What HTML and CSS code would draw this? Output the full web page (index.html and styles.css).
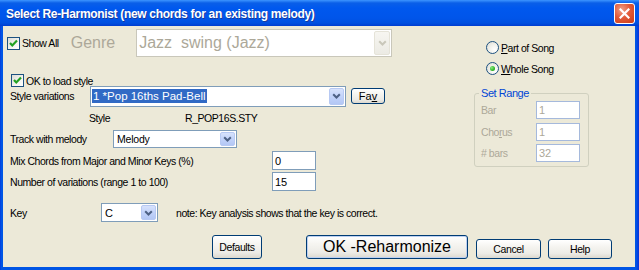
FILE: index.html
```html
<!DOCTYPE html>
<html>
<head>
<meta charset="utf-8">
<title>Select Re-Harmonist</title>
<link rel="stylesheet" href="styles.css">
</head>
<body>
<div class="window">
  <div class="titlebar">
    <span class="title">Select Re-Harmonist (new chords for an existing melody)</span>
    <span class="close"><svg width="11" height="11" viewBox="0 0 11 11"><path d="M1.5 1.5 L9.5 9.5 M9.5 1.5 L1.5 9.5" stroke="#fff" stroke-width="2.2" stroke-linecap="square"/></svg></span>
  </div>
  <div class="client">
    <div class="main">
      <div class="left">
        <div class="row row-a">
          <span class="check"><svg width="11" height="11" viewBox="0 0 11 11"><path d="M2 5 L4.3 7.5 L9 2.6" fill="none" stroke="#21A121" stroke-width="2.2"/></svg></span>
          <span class="cb-label">Show All</span>
          <span class="genre">Genre</span>
          <span class="combo combo-genre disabled">
            <span class="combo-text">Jazz&nbsp; swing (Jazz)</span>
            <span class="arrow"><svg width="9" height="6" viewBox="0 0 9 6"><path d="M1.2 1.2 L4.5 4.5 L7.8 1.2" fill="none" stroke="#C9C7BA" stroke-width="2"/></svg></span>
          </span>
        </div>
        <div class="row row-b">
          <span class="check"><svg width="11" height="11" viewBox="0 0 11 11"><path d="M2 5 L4.3 7.5 L9 2.6" fill="none" stroke="#21A121" stroke-width="2.2"/></svg></span>
          <span class="cb-label">OK to load style</span>
        </div>
        <div class="row row-c">
          <span class="label w-style-var">Style variations</span>
          <span class="combo combo-style">
            <span class="combo-text"><span class="sel">1 *Pop 16ths Pad-Bell</span></span>
            <span class="arrow"><svg width="9" height="6" viewBox="0 0 9 6"><path d="M1.2 1.2 L4.5 4.5 L7.8 1.2" fill="none" stroke="#4D6185" stroke-width="2"/></svg></span>
          </span>
          <button class="btn btn-fav">Fa<u>v</u></button>
        </div>
        <div class="row row-d">
          <span class="label w-style">Style</span>
          <span class="label">R_POP16S.STY</span>
        </div>
        <div class="row row-e">
          <span class="label w-track">Track with melody</span>
          <span class="combo combo-track">
            <span class="combo-text">Melody</span>
            <span class="arrow"><svg width="9" height="6" viewBox="0 0 9 6"><path d="M1.2 1.2 L4.5 4.5 L7.8 1.2" fill="none" stroke="#4D6185" stroke-width="2"/></svg></span>
          </span>
        </div>
        <div class="row row-f">
          <span class="label w-num">Mix Chords from Major and Minor Keys (%)</span>
          <span class="input">0</span>
        </div>
        <div class="row row-g">
          <span class="label w-num">Number of variations (range 1 to 100)</span>
          <span class="input">15</span>
        </div>
        <div class="row row-h">
          <span class="label w-key">Key</span>
          <span class="combo combo-key">
            <span class="combo-text">C</span>
            <span class="arrow"><svg width="9" height="6" viewBox="0 0 9 6"><path d="M1.2 1.2 L4.5 4.5 L7.8 1.2" fill="none" stroke="#4D6185" stroke-width="2"/></svg></span>
          </span>
          <span class="label note">note: Key analysis shows that the key is correct.</span>
        </div>
      </div>
      <div class="right">
        <div class="radio-row r1">
          <span class="radio"></span>
          <span class="cb-label"><u>P</u>art of Song</span>
        </div>
        <div class="radio-row r2">
          <span class="radio on"><span class="dot"></span></span>
          <span class="cb-label"><u>W</u>hole Song</span>
        </div>
        <fieldset class="range">
          <legend>Set Range</legend>
          <div class="frow"><span class="flabel">Bar</span><span class="input dis">1</span></div>
          <div class="frow f2"><span class="flabel">Cho<u>r</u>us</span><span class="input dis">1</span></div>
          <div class="frow f3"><span class="flabel"># bars</span><span class="input dis">32</span></div>
        </fieldset>
      </div>
    </div>
    <div class="buttons">
      <button class="btn btn-defaults">Defaults</button>
      <button class="btn btn-ok">OK -Reharmonize</button>
      <button class="btn btn-cancel">Cancel</button>
      <button class="btn btn-help">Help</button>
    </div>
  </div>
</div>
</body>
</html>
```

FILE: styles.css
```css
html, body {
  margin: 0;
  padding: 0;
  background: #ffffff;
}

.window {
  width: 639px;
  height: 270px;
  box-sizing: border-box;
  display: flex;
  flex-direction: column;
  background: linear-gradient(to right, #0831D9 0, #0055E5 1px, #0055E5 636px, #0831D9 639px);
  font-family: "Liberation Sans", Arial, sans-serif;
  font-size: 10.5px;
  letter-spacing: -0.45px;
  color: #000;
}

.titlebar {
  height: 26px;
  flex: none;
  display: flex;
  align-items: center;
  padding: 0 4px 0 6px;
  background: linear-gradient(to bottom, #3D95FF 0, #0A5FE8 3px, #0058EE 8px, #0055EA 18px, #0050E0 23px, #003DD0 26px);
}

.title {
  flex: 1;
  color: #fff;
  font-weight: bold;
  font-size: 12px;
  letter-spacing: -0.32px;
  text-shadow: 1px 1px #1A3A9C;
  padding-top: 1px;
}

.close {
  width: 19px;
  height: 19px;
  border: 1px solid #fff;
  border-radius: 3px;
  display: flex;
  align-items: center;
  justify-content: center;
  background: radial-gradient(circle at 35% 30%, #F0A088 0, #E25B3A 45%, #C93B16 100%);
}

.client {
  flex: 1;
  margin: 0 4px 3px 3px;
  background: #ECE9D8;
  display: flex;
  flex-direction: column;
}

.main {
  display: flex;
  height: 196px;
}

.left {
  width: 460px;
  display: flex;
  flex-direction: column;
}

.row {
  display: flex;
  align-items: center;
  padding-left: 7px;
}

.row-a { margin-top: 3px; height: 28px; padding-left: 4px; }
.row-b { margin-top: 17px; height: 13px; padding-left: 8px; }
.row-c { margin-top: -1px; height: 20px; }
.row-d { margin-top: 5px; height: 14px; padding-left: 86px; }
.row-e { margin-top: 5px; height: 18px; }
.row-f { margin-top: 3px; height: 19px; }
.row-g { margin-top: 2px; height: 19px; }
.row-h { margin-top: 12px; height: 19px; }

.check {
  width: 13px;
  height: 13px;
  box-sizing: border-box;
  border: 1px solid #1C5180;
  background: linear-gradient(135deg, #DCDCD7 0%, #F4F4F0 60%, #FFFFFF 100%);
  display: flex;
  align-items: center;
  justify-content: center;
  flex: none;
}

.cb-label {
  margin-left: 2px;
  white-space: nowrap;
}

.genre {
  margin-left: 12px;
  font-size: 16px;
  letter-spacing: 0;
  color: #ACA899;
}

.combo {
  display: flex;
  align-items: stretch;
  box-sizing: border-box;
  border: 1px solid #7F9DB9;
  background: #fff;
  letter-spacing: 0;
  flex: none;
}

.combo-text {
  flex: 1;
  display: flex;
  align-items: center;
  padding-left: 2px;
  white-space: nowrap;
  overflow: hidden;
}

.arrow {
  width: 15px;
  margin: 1px;
  box-sizing: border-box;
  border: 1px solid #B7C9F3;
  border-radius: 2px;
  background: linear-gradient(to bottom, #D7E2FC 0%, #C2D3FA 50%, #B3C7F5 100%);
  display: flex;
  align-items: center;
  justify-content: center;
}

.combo-genre {
  margin-left: 21px;
  width: 256px;
  height: 28px;
  border-color: #C9C7BA;
  font-size: 16px;
  color: #ACA899;
}

.combo-genre .arrow {
  width: 16px;
  border-color: #E5E3D8;
  background: linear-gradient(to bottom, #F7F6F1, #ECEBE4);
}

.label {
  white-space: nowrap;
}

.w-style-var { width: 80px; flex: none; }
.w-style { width: 96px; flex: none; }
.w-track { width: 103px; flex: none; }
.w-num { width: 262px; flex: none; }
.w-key { width: 91px; flex: none; }

.combo-style {
  width: 256px;
  height: 21px;
  font-size: 11.5px;
}

.combo-style .combo-text {
  padding-left: 1px;
}

.sel {
  background: #316AC5;
  color: #fff;
  padding: 1px 1px;
}

.combo-track {
  width: 124px;
  height: 18px;
  font-size: 10.5px;
  letter-spacing: -0.2px;
}

.combo-key {
  width: 57px;
  height: 19px;
  font-size: 11px;
}

.combo-track .combo-text,
.combo-key .combo-text {
  padding-left: 3px;
}

.note {
  margin-left: 18px;
}

.input {
  display: flex;
  align-items: center;
  box-sizing: border-box;
  width: 44px;
  height: 19px;
  border: 1px solid #7F9DB9;
  background: #fff;
  padding-left: 2px;
  font-size: 11px;
  letter-spacing: 0;
  flex: none;
}

.right {
  flex: 1;
  display: flex;
  flex-direction: column;
  align-items: flex-start;
  padding-left: 11px;
}

.radio-row {
  display: flex;
  align-items: center;
  margin-left: 12px;
  height: 13px;
}

.r1 { margin-top: 15px; }
.r2 { margin-top: 8px; }

.radio {
  width: 13px;
  height: 13px;
  box-sizing: border-box;
  border: 1px solid #1C5180;
  border-radius: 50%;
  background: radial-gradient(circle at 70% 70%, #FFFFFF 0, #F0F0EA 50%, #D8D8D0 100%);
  display: flex;
  align-items: center;
  justify-content: center;
  flex: none;
}

.dot {
  width: 5px;
  height: 5px;
  border-radius: 50%;
  background: radial-gradient(circle at 35% 35%, #8BEA7F 0, #2FB62B 60%, #1E8F1B 100%);
}

.range {
  margin: 12px 0 0 0;
  width: 115px;
  box-sizing: border-box;
  border: 1px solid #D0D0BF;
  border-radius: 3px;
  padding: 2px 8px 4px 6px;
}

.range legend {
  color: #0046D5;
  line-height: 12px;
  font-size: 11px;
  padding: 0 2px;
  margin-left: -2px;
}

.frow {
  display: flex;
  align-items: center;
  height: 18px;
}

.f2 { margin-top: 4px; }
.f3 { margin-top: 3px; }

.flabel {
  width: 55px;
  color: #ACA899;
  white-space: nowrap;
}

.input.dis {
  height: 18px;
  border-color: #A5B9DC;
  color: #ACA899;
}

.buttons {
  display: flex;
  align-items: flex-end;
  padding-left: 209px;
  margin-top: 13px;
  height: 24px;
}

.btn {
  box-sizing: border-box;
  border: 1px solid #003C74;
  border-radius: 3px;
  background: linear-gradient(to bottom, #FFFFFF 0%, #F6F5F1 35%, #ECEBE6 75%, #DCD8CE 100%);
  font-family: "Liberation Sans", Arial, sans-serif;
  font-size: 10.5px;
  letter-spacing: -0.4px;
  color: #000;
  padding: 0;
  margin: 0;
  display: flex;
  align-items: center;
  justify-content: center;
  flex: none;
}

.btn-fav {
  width: 34px;
  height: 16px;
  margin-left: 5px;
  font-size: 11px;
  letter-spacing: 0;
}

.btn-defaults {
  width: 50px;
  height: 24px;
}

.btn-ok {
  width: 162px;
  height: 24px;
  margin-left: 44px;
  font-size: 16px;
  letter-spacing: 0;
  box-shadow: inset 0 0 0 1px #BCD0F2;
}

.btn-cancel {
  width: 65px;
  height: 20px;
  margin-left: 8px;
}

.btn-help {
  width: 64px;
  height: 20px;
  margin-left: 7px;
}
```
